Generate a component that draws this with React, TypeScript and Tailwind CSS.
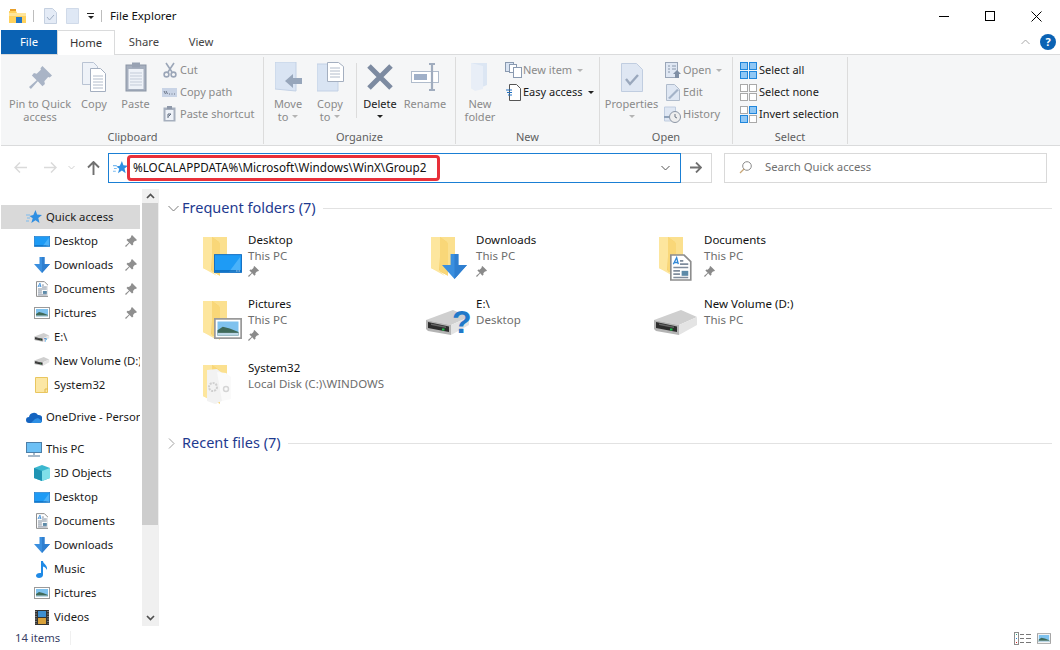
import React from "react";

const F = "font-['Noto_Sans','Open_Sans',sans-serif]";

/* ---------- small drawings ---------- */
const Folder = () => (
  <svg width="40" height="42" viewBox="0 0 40 42">
    <path d="M1 2h24v32H9z" fill="#fbe08f" />
    <path d="M1 2h9l7 5v33L1 33z" fill="#f6d06e" />
    <path d="M1 2l9 0 1 6-2 27 6 6L1 33z" fill="#fde69e" />
    <path d="M10 2l8 6v33l-8-5z" fill="#f9d778" />
  </svg>
);
const ScreenBlue = ({ w = 30, h = 20 }: { w?: number; h?: number }) => (
  <svg width={w} height={h} viewBox="0 0 30 20">
    <rect x="0.5" y="0.5" width="29" height="19" fill="#1e9bf5" stroke="#0f6cc0" />
    <path d="M16 19L28 3v16z" fill="#49b2fa" />
    <path d="M1 18h28" stroke="#0a5fae" strokeWidth="1.4" />
    <path d="M24 18h1M26.500 18h1" stroke="#fff" />
  </svg>
);
const ArrowDown = ({ s = 16 }: { s?: number }) => (
  <svg width={s} height={s} viewBox="0 0 16 16">
    <path d="M5.500 0h5v7H16l-8 9-8-9h5.500z" fill="#3a8fdf" />
    <path d="M8 0h2.500v7H16l-8 9z" fill="#2f7fd0" />
  </svg>
);
const Doc = ({ s = 16 }: { s?: number }) => (
  <svg width={s * 0.8} height={s} viewBox="0 0 13 16">
    <path d="M.5.500h8l4 4v11H.5z" fill="#fff" stroke="#8d8d8d" />
    <path d="M6 4h2M6 6h5M2 8h9M2 10h4M2 12h4M2 14h9" stroke="#7f8c9c" />
    <path d="M2 6l2-4 1 4M2.500 5H5" stroke="#2e86d6" fill="none" strokeWidth=".8" />
    <rect x="7" y="10" width="4" height="3" fill="#5d8aa8" />
  </svg>
);
const Photo = ({ w = 16, h = 12 }: { w?: number; h?: number }) => (
  <svg width={w} height={h} viewBox="0 0 16 12">
    <rect x="0.5" y="0.5" width="15" height="11" fill="#fff" stroke="#9a9a9a" />
    <rect x="2" y="2" width="12" height="8" fill="#7fc2ee" />
    <path d="M2 7l3-2 4 1 5 2v2H2z" fill="#3f6a5a" />
    <rect x="2" y="8.500" width="12" height="1.500" fill="#bcd7e6" />
  </svg>
);
const Drive = ({ w = 46, q = false, qs = 32 }: { w?: number; q?: boolean; qs?: number }) => (
  <svg width={w} height={(w * 30) / 46} viewBox="0 0 46 30" className="overflow-visible">
    <path d="M1 13L28 3l16 7-18 8z" fill="#cfcfcf" />
    <path d="M1 13l25 5v10L3 24l-2-2z" fill="#b4b4b4" />
    <path d="M3 15l21 4.500v5.500L3 21z" fill="#2d2d2d" />
    <path d="M6 16.500l15 3v1.500l-15-3z" fill="#666" />
    <path d="M26 18l18-8v8L26 28z" fill="#e4e4e4" />
    <rect x="17" y="21.500" width="2.500" height="2" fill="#21c04b" />
    {q && (
      <text x="27" y={w > 30 ? 26 : 28} fontSize={qs} fontWeight="700" fill="#2179c9" fontFamily="Liberation Sans">
        ?
      </text>
    )}
  </svg>
);
const Pin = ({ c = "#8f8f8f", s = 12 }: { c?: string; s?: number }) => (
  <svg width={s} height={s} viewBox="0 0 12 12">
    <path d="M7 0l5 5-1.200 1-.8-.2L8 8l.3 1.400L7 10.500 4.600 8 1 12l-1-1 4-3.600L1.500 5 2.600 3.700 4 4l2.200-2-.2-.8z" fill={c} />
  </svg>
);
const Star = ({ s = 16 }: { s?: number }) => (
  <svg width={s} height={s} viewBox="0 0 16 16">
    <path d="M9.500 1l1.600 4.500L16 6l-3.700 3 1.200 5-4-2.700L5.300 14l1.400-4.700L3.500 7l3.800-.9z" fill="#2f8fe2" />
    <path d="M0 6h4M1 9h3M0 12h3" stroke="#7cbcf0" strokeWidth="1.200" />
  </svg>
);
const Cap = () => <span className="inline-block w-0 h-0 border-x-[3px] border-x-transparent border-t-[3px] border-t-[#b4b4b4]" />;
const CapDark = () => <span className="inline-block w-0 h-0 border-x-[3px] border-x-transparent border-t-[3px] border-t-[#222]" />;

/* ---------- ribbon ---------- */
const Big = ({ w, icon, l1, l2, dark }: { w: string; icon: React.ReactNode; l1: string; l2?: React.ReactNode; dark?: boolean }) => (
  <div className={`${w} shrink-0 flex flex-col items-center pt-[3px] leading-[13px] ${dark ? "text-[#1a1a1a]" : "text-[#8a8a8a]"}`}>
    <div className="h-[34px] shrink-0 flex items-center justify-center">{icon}</div>
    <div className="mt-[3px] whitespace-nowrap h-[13px]">{l1}</div>
    {l2 && <div className="whitespace-nowrap h-[13px] flex items-center gap-1">{l2}</div>}
  </div>
);
const Small = ({ icon, label, dark, caret, w = "w-[19px]" }: { icon: React.ReactNode; label: string; dark?: boolean; caret?: React.ReactNode; w?: string }) => (
  <div className={`h-[22px] shrink-0 flex items-center whitespace-nowrap ${dark ? "text-[#1a1a1a]" : "text-[#8a8a8a]"}`}>
    <span className={`${w} shrink-0 flex justify-center`}>{icon}</span>
    <span className="ml-px">{label}</span>
    {caret && <span className="ml-[5px] flex">{caret}</span>}
  </div>
);
const Group = ({ w, label, children }: { w: string; label: string; children: React.ReactNode }) => (
  <div className={`${w} shrink-0 h-full flex flex-col border-r border-[#dcdcdc]`}>
    <div className="flex-1 flex min-h-0">{children}</div>
    <div className="h-[14px] text-center text-[#5f5f5f] leading-[14px]">{label}</div>
  </div>
);
const SelIcon = ({ mask }: { mask: boolean[] }) => (
  <svg width="17" height="17" viewBox="0 0 17 17">
    {[0, 1, 2, 3].map((i) => {
      const x = i % 2 ? 9.5 : 0.5, y = i > 1 ? 9.5 : 0.5;
      return <rect key={i} x={x} y={y} width="7" height="7" fill={mask[i] ? "#8fc7f5" : "#fff"} stroke={mask[i] ? "#1f86dc" : "#a9a9a9"} />;
    })}
  </svg>
);
const Ribbon = () => (
  <div className="h-[92px] bg-[#f5f6f7] border-b border-[#dadbdc] flex pt-[3px] pb-[1px] pl-[1px] text-[#8a8a8a] text-[11px]">
    <Group w="w-[262px]" label="Clipboard">
      <Big w="w-[76px]" icon={<svg width="23" height="23" viewBox="0 0 12 12"><path d="M7 0l5 5-1.200 1-.8-.2L8 8l.3 1.400L7 10.500 4.600 8 1 12l-1-1 4-3.600L1.500 5 2.600 3.700 4 4l2.200-2-.2-.8z" fill="#a9b4c6" /></svg>} l1="Pin to Quick" l2="access" />
      <Big w="w-[32px]" icon={<svg width="26" height="30" viewBox="0 0 26 30"><path d="M1.500.500h11l4 4v18h-15z" fill="#eef2f8" stroke="#b9c3d3" /><path d="M9.500 6.500h10l5 5v18h-15z" fill="#fff" stroke="#a4afc0" /><path d="M12 14h10M12 17h10M12 20h10M12 23h10M12 26h10" stroke="#b2bccb" /></svg>} l1="Copy" />
      <Big w="w-[51px]" icon={<svg width="22" height="30" viewBox="0 0 22 30"><rect x="1" y="3" width="20" height="26" fill="#a6afbe" stroke="#8b95a6" /><rect x="3.500" y="7" width="15" height="20" fill="#eef2f8" /><rect x="7" y="0.500" width="8" height="5" fill="#98a2b3" /><path d="M5 11h12M5 14h12M5 17h12M5 20h12M5 23h12" stroke="#c3cbd8" /></svg>} l1="Paste" />
      <div className="flex flex-col pt-[2px] -ml-[1px]">
        <Small icon={<svg width="14" height="16" viewBox="0 0 14 16" fill="none" stroke="#9ba6b8" strokeWidth="1.600"><path d="M3 1l6 9M11 1l-6 9" /><circle cx="3.500" cy="12.500" r="2.400" /><circle cx="10.500" cy="12.500" r="2.400" /></svg>} label="Cut" />
        <Small icon={<svg width="15" height="9" viewBox="0 0 15 9"><rect width="15" height="9" fill="#c9d4e6" /><path d="M2 3l1.500 3M4 3l1.500 3M7 6h1M9.500 6h1M12 6h1" stroke="#6a7486" /></svg>} label="Copy path" />
        <Small icon={<svg width="13" height="16" viewBox="0 0 13 16"><rect x=".5" y="1.500" width="12" height="14" fill="#a6afbe" /><rect x="2.500" y="4" width="8" height="10" fill="#eef2f8" /><rect x="4" y="0" width="5" height="3" fill="#8f99aa" /><path d="M5 12V8h3M8 8L5.500 10.500" stroke="#5e6a7d" fill="none" /></svg>} label="Paste shortcut" />
      </div>
    </Group>
    <Group w="w-[192px]" label="Organize">
      <Big w="w-[48px]" icon={<svg width="27" height="30" viewBox="0 0 27 30"><path d="M0 0h21v29L0 27z" fill="#d9e4f3" stroke="#c3d1e5" /><path d="M10 19l8-7v4h9v6h-9v4z" fill="#97a6bb" /></svg>} l1="Move" l2={<>to <Cap /></>} />
      <Big w="w-[36px]" icon={<svg width="27" height="30" viewBox="0 0 27 30"><path d="M0 2h21v27H0z" fill="#d9e4f3" stroke="#c3d1e5" /><path d="M10.500.500h11l5 4v15h-16z" fill="#fff" stroke="#a4afc0" /><path d="M13 6h10M13 9h10M13 12h10M13 15h10" stroke="#b2bccb" /></svg>} l1="Copy" l2={<>to <Cap /></>} />
      <div className="w-px h-[55px] mt-[6px] ml-[8px] shrink-0 bg-[#dcdcdc]" />
      <Big w="w-[46px]" dark icon={<svg width="26" height="26" viewBox="0 0 26 26"><path d="M2 2l22 22M24 2L2 24" stroke="#7d8ba1" strokeWidth="5" /></svg>} l1="Delete" l2={<CapDark />} />
      <Big w="w-[44px]" icon={<svg width="28" height="28" viewBox="0 0 28 28"><rect x=".5" y="8.500" width="27" height="11" fill="#fff" stroke="#b0bccc" /><rect x="3" y="11" width="13" height="6" fill="#a0b0c8" /><path d="M18 1h6M21 1v26M18 27h6" stroke="#a0acbe" strokeWidth="2.200" fill="none" /></svg>} l1="Rename" />
    </Group>
    <Group w="w-[144px]" label="New">
      <Big w="w-[48px]" icon={<svg width="20" height="29" viewBox="0 0 20 29"><path d="M1 0h16v22l-12 5-4-2z" fill="#dce6f3" /><path d="M1 0l12 3v23l-8 2-4-3z" fill="#e8eef7" /></svg>} l1="New" l2="folder" />
      <div className="flex flex-col pt-[2px]">
        <Small w="w-[18px]" icon={<svg width="17" height="16" viewBox="0 0 17 16"><rect x=".5" y=".5" width="8" height="9" fill="#d9e4f3" stroke="#8a9ab0" /><rect x="4.500" y="2.500" width="7" height="8" fill="#fff" stroke="#8a9ab0" /><rect x="8.500" y="5.500" width="8" height="10" fill="#fff" stroke="#8a9ab0" /></svg>} label="New item" caret={<Cap />} />
        <Small w="w-[18px]" dark icon={<svg width="15" height="17" viewBox="0 0 15 17"><path d="M3.500.500h7l4 4v12h-11z" fill="#fff" stroke="#555" /><path d="M0 6h6M1 8.500h5M2 11h4" stroke="#1f6fc0" /></svg>} label="Easy access" caret={<CapDark />} />
      </div>
    </Group>
    <Group w="w-[133px]" label="Open">
      <Big w="w-[63px]" icon={<svg width="22" height="29" viewBox="0 0 22 29"><path d="M.5.500h15l6 6v22H.5z" fill="#dfe7f3" stroke="#c0cde0" /><path d="M5 16l4 5 8-9" stroke="#9aa8bd" strokeWidth="2.400" fill="none" /></svg>} l1="Properties" l2={<Cap />} />
      <div className="flex flex-col pt-[2px]">
        <Small icon={<svg width="16" height="17" viewBox="0 0 16 17"><rect x=".5" y=".5" width="12" height="15" fill="#dfe7f3" stroke="#9aa6b8" /><path d="M3 4h2M7 4h4M3 7h2M7 7h4M3 10h2" stroke="#8896aa" /><path d="M12 8l4 4h-2v4h-4v-4H8z" fill="#7f8fa5" /></svg>} label="Open" caret={<Cap />} />
        <Small icon={<svg width="14" height="17" viewBox="0 0 14 17"><path d="M.5.500h8l5 5v11H.5z" fill="#dfe7f3" stroke="#b0bccc" /><path d="M2 14l9-9 2 1-9 9z" fill="#a4b3c8" /></svg>} label="Edit" />
        <Small icon={<svg width="17" height="17" viewBox="0 0 17 17"><path d="M.5 1h11v14H.5z" fill="#dfe7f3" stroke="#c0cde0" /><circle cx="11" cy="11" r="5.500" fill="#eee" stroke="#8c96a5" /><path d="M11 8v3l2 1" stroke="#6c7685" fill="none" /><path d="M0 11h5" stroke="#8fa2ba" strokeWidth="2" /></svg>} label="History" />
      </div>
    </Group>
    <Group w="w-[115px]" label="Select">
      <div className="flex flex-col pt-[2px] pl-[6px] text-[#1a1a1a]">
        <Small w="w-[19px]" dark icon={<SelIcon mask={[true, true, true, true]} />} label="Select all" />
        <Small w="w-[19px]" dark icon={<SelIcon mask={[false, false, false, false]} />} label="Select none" />
        <Small w="w-[19px]" dark icon={<SelIcon mask={[false, true, true, false]} />} label="Invert selection" />
      </div>
    </Group>
  </div>
);

/* ---------- sidebar ---------- */
const Row = ({ icon, label, pin, sel, indent = true, mt = "" }: { icon: React.ReactNode; label: string; pin?: boolean; sel?: boolean; indent?: boolean; mt?: string }) => (
  <div className={`h-[24px] flex items-center shrink-0 ${sel ? "bg-[#d9d9d9]" : ""} ${indent ? "pl-[32px]" : "pl-[24px]"} ${mt}`}>
    <span className="w-[18px] shrink-0 flex justify-center">{icon}</span>
    <span className="ml-[3px] flex-1 min-w-0 overflow-hidden whitespace-nowrap text-[#1a1a1a]">{label}</span>
    {pin && <span className="mr-[3px] ml-1 flex"><Pin /></span>}
  </div>
);
const SideFolder = () => (
  <svg width="14" height="16" viewBox="0 0 14 16"><path d="M.5.500h12v15H.5z" fill="#fce7a4" stroke="#e9c65f" /><path d="M10 15v-3h3" stroke="#e3bb4d" fill="none" /></svg>
);
const Music = () => (
  <svg width="12" height="17" viewBox="0 0 12 17"><path d="M5 0h2c0 3 5 4 4 9-1-2-2-3-4-3.500V14c0 2-2 3-4 3s-3-1-3-2.500S2 11.500 5 12z" fill="#1f8ae6" /></svg>
);
const Sidebar = () => (
  <div className="w-[157px] shrink-0 flex">
    <div className="w-[139px] shrink-0 flex flex-col pt-[16px] overflow-hidden">
      <Row sel indent={false} icon={<Star />} label="Quick access" />
      <Row pin icon={<ScreenBlue w={16} h={11} />} label="Desktop" />
      <Row pin icon={<ArrowDown />} label="Downloads" />
      <Row pin icon={<Doc />} label="Documents" />
      <Row pin icon={<Photo />} label="Pictures" />
      <Row icon={<Drive w={16} q qs={15} />} label="E:\" />
      <Row icon={<Drive w={16} />} label="New Volume (D:)" />
      <Row icon={<SideFolder />} label="System32" />
      <Row mt="mt-[8px]" indent={false} icon={<svg width="16" height="11" viewBox="0 0 16 11"><path d="M3 11a3 3 0 010-6 5 5 0 019-2 4 4 0 011 8z" fill="#1464c0" /><path d="M5 11l4-4 3-1 4 3-1 2z" fill="#2d8fe4" /></svg>} label="OneDrive - Personal" />
      <Row mt="mt-[8px]" indent={false} icon={<svg width="16" height="15" viewBox="0 0 16 15"><rect x=".5" y=".5" width="15" height="10" fill="#6cc0f5" stroke="#4d7fa8" /><path d="M8 11v2M2 14h12" stroke="#8aa2b8" strokeWidth="1.500" /></svg>} label="This PC" />
      <Row icon={<svg width="16" height="16" viewBox="0 0 16 16"><path d="M8 0l8 3v10l-8 3-8-3V3z" fill="#3bb7cf" /><path d="M8 6l8-3v10l-8 3z" fill="#7fe0ea" /><path d="M0 3l8 3v10L0 13z" fill="#1f94b3" /></svg>} label="3D Objects" />
      <Row icon={<ScreenBlue w={16} h={11} />} label="Desktop" />
      <Row icon={<Doc />} label="Documents" />
      <Row icon={<ArrowDown />} label="Downloads" />
      <Row icon={<Music />} label="Music" />
      <Row icon={<Photo />} label="Pictures" />
      <Row icon={<svg width="14" height="15" viewBox="0 0 14 15"><rect width="14" height="15" fill="#333" /><rect x="3" y="1" width="8" height="6" fill="#3e8fd0" /><rect x="3" y="8" width="8" height="6" fill="#d9a13a" /><path d="M1 1v13M13 1v13" stroke="#bbb" strokeDasharray="1 1.500" /></svg>} label="Videos" />
    </div>
    <div className="w-[16px] shrink-0 ml-[2px] bg-[#f0f0f0] flex flex-col">
      <div className="h-[14px] shrink-0 flex items-center justify-center"><svg width="9" height="6" viewBox="0 0 9 6"><path d="M1 5l3.500-3.500L8 5" stroke="#505050" strokeWidth="1.700" fill="none" /></svg></div>
      <div className="h-[322px] shrink-0 bg-[#cdcdcd]" />
      <div className="flex-1 flex items-end justify-center pb-[5px]"><svg width="9" height="6" viewBox="0 0 9 6"><path d="M1 1l3.500 3.500L8 1" stroke="#505050" strokeWidth="1.700" fill="none" /></svg></div>
    </div>
  </div>
);

/* ---------- content ---------- */
const Tile = ({ icon, name, sub, pin }: { icon: React.ReactNode; name: string; sub: string; pin?: boolean }) => (
  <div className="h-[64px] flex">
    <div className="w-[53px] shrink-0 pt-[3px] relative">{icon}</div>
    <div className="flex flex-col leading-[15.5px] text-[11.5px]">
      <span className="text-[#111] whitespace-nowrap">{name}</span>
      <span className="text-[#6d6d6d] whitespace-nowrap">{sub}</span>
      {pin && <span className="pt-[3px] flex"><Pin c="#8a8a8a" s={11} /></span>}
    </div>
  </div>
);
const FolderWith = ({ children }: { children?: React.ReactNode }) => (
  <div className="relative w-[46px] h-[42px] ml-[7px]">
    <Folder />
    {children && <div className="absolute left-[12px] top-[19px]">{children}</div>}
  </div>
);
const Sec = ({ open, label }: { open: boolean; label: string }) => (
  <div className="flex items-center h-[24px] pl-[9px] pr-[8px]">
    <span className="w-[14px] flex">
      {open ? (
        <svg width="11" height="7" viewBox="0 0 11 7"><path d="M.5 1l5 5 5-5" stroke="#7c7c7c" fill="none" /></svg>
      ) : (
        <svg width="7" height="11" viewBox="0 0 7 11"><path d="M1 .5l5 5-5 5" stroke="#a0a0a0" fill="none" /></svg>
      )}
    </span>
    <span className="text-[#1e3a8f] text-[14.5px] whitespace-nowrap">{label}</span>
    <div className="flex-1 h-px bg-[#e2e2e2] ml-[7px]" />
  </div>
);
const Content = () => (
  <div className="flex-1 min-w-0 flex flex-col pt-[7px] border-l border-[#efefef]">
    <Sec open label="Frequent folders (7)" />
    <div className="grid grid-cols-[228px_228px_228px] pl-[36px] pt-[12px]">
      <Tile name="Desktop" sub="This PC" pin icon={<FolderWith><ScreenBlue w={28} h={19} /></FolderWith>} />
      <Tile name="Downloads" sub="This PC" pin icon={<FolderWith><ArrowDown s={25} /></FolderWith>} />
      <Tile name="Documents" sub="This PC" pin icon={<FolderWith><Doc s={27} /></FolderWith>} />
      <Tile name="Pictures" sub="This PC" pin icon={<FolderWith><Photo w={28} h={21} /></FolderWith>} />
      <Tile name="E:\" sub="Desktop" icon={<div className="pt-[8px] ml-[2px]"><Drive q /></div>} />
      <Tile name="New Volume (D:)" sub="This PC" icon={<div className="pt-[8px] ml-[2px]"><Drive /></div>} />
      <Tile name="System32" sub="Local Disk (C:)\WINDOWS" icon={<FolderWith><svg width="26" height="36" viewBox="0 0 26 36" className="-mt-[14px] -ml-[8px]"><path d="M1 2l10-1 5 4v28l-7 3-8-3z" fill="#f2f2f2" /><path d="M11 4l9 1 5 4v22l-9 2z" fill="#fafafa" /><circle cx="7" cy="19" r="4" fill="none" stroke="#cfcfcf" strokeWidth="2" strokeDasharray="2 1" /><circle cx="20" cy="21" r="2.500" fill="none" stroke="#d5d5d5" strokeWidth="1.500" /></svg></FolderWith>} />
    </div>
    <div className="mt-[-1px] pt-[8px]"><Sec open={false} label="Recent files (7)" /></div>
  </div>
);

export default function App() {
  return (
    <div className={`${F} w-[1060px] h-[650px] bg-white overflow-hidden flex flex-col text-[11.3px] text-[#1a1a1a] pl-[1px]`}>
      {/* title */}
      <div className="h-[30px] flex items-center pl-[8px] pt-[2px] shrink-0">
        <svg width="17" height="14" viewBox="0 0 17 14"><path d="M0 2h7l1 2h9v10H0z" fill="#ffd15c" /><path d="M0 4h17v3H0z" fill="#ffe59a" /><rect x="7" y="8" width="6" height="6" fill="#1f74c8" /><rect x="1" y="0" width="6" height="2" fill="#e8a02c" /></svg>
        <div className="w-px h-[12px] bg-[#bdbdbd] ml-[7px]" />
        <svg className="ml-[10px]" width="13" height="16" viewBox="0 0 13 16"><path d="M.5.500h8l4 4v11H.5z" fill="#e4ebf6" stroke="#c5d0e0" /><path d="M3 9l2.500 3 4.500-5" stroke="#a0aec2" fill="none" /></svg>
        <svg className="ml-[9px]" width="13" height="16" viewBox="0 0 13 16"><path d="M.5.500h12v15H.5z" fill="#dfe8f5" stroke="#d0dae9" /></svg>
        <span className="ml-[8px] flex flex-col items-center gap-[2px]"><span className="w-[7px] h-px bg-[#222]" /><CapDark /></span>
        <div className="w-px h-[12px] bg-[#bdbdbd] ml-[7px]" />
        <span className="ml-[8px] text-[#111] text-[11.5px]">File Explorer</span>
        <div className="ml-auto flex items-center pr-[1px]">
          <span className="w-[46px] flex justify-center"><span className="w-[10px] h-px bg-black" /></span>
          <span className="w-[46px] flex justify-center"><span className="w-[10px] h-[10px] border border-black" /></span>
          <span className="w-[46px] flex justify-center"><svg width="11" height="11" viewBox="0 0 11 11"><path d="M.5.500l10 10M10.500.500l-10 10" stroke="#000" /></svg></span>
        </div>
      </div>
      {/* tabs */}
      <div className="h-[25px] flex shrink-0 relative z-10 -mb-px items-stretch border-b border-[#dadbdc]">
        <div className="w-[56px] bg-[#0a62b4] text-white flex items-center justify-center">File</div>
        <div className="w-[58px] bg-white border-x border-t border-[#dadbdc] -mb-px flex items-center justify-center text-[#333]">Home</div>
        <div className="w-[58px] flex items-center justify-center text-[#444]">Share</div>
        <div className="w-[56px] flex items-center justify-center text-[#444]">View</div>
        <div className="ml-auto flex items-center pr-[4px] gap-[10px]">
          <svg width="9" height="6" viewBox="0 0 9 6"><path d="M.5 5l4-4 4 4" stroke="#a8a8a8" fill="none" /></svg>
          <span className="w-[16px] h-[16px] rounded-full bg-[#0a62b4] text-white font-bold text-[11px] flex items-center justify-center">?</span>
        </div>
      </div>
      <Ribbon />
      {/* nav */}
      <div className="h-[43px] shrink-0 flex items-center text-[#1a1a1a]">
        <svg className="ml-[13px]" width="13" height="11" viewBox="0 0 13 11"><path d="M6 .5l-5 5 5 5M1 5.500h12" stroke="#dadada" strokeWidth="1.500" fill="none" /></svg>
        <svg className="ml-[17px]" width="13" height="11" viewBox="0 0 13 11"><path d="M7 .5l5 5-5 5M0 5.500h12" stroke="#dadada" strokeWidth="1.500" fill="none" /></svg>
        <svg className="ml-[11px]" width="7" height="5" viewBox="0 0 7 5"><path d="M.5 1l3 3 3-3" stroke="#d0d0d0" fill="none" /></svg>
        <svg className="ml-[12px]" width="13" height="14" viewBox="0 0 13 14"><path d="M6.500 14V1M1 6.500l5.500-5.500 5.500 5.500" stroke="#707070" strokeWidth="1.900" fill="none" /></svg>
        <div className="ml-[8px] w-[573px] h-[30px] border border-[#1a7fd4] flex items-center pl-[4px] pr-[10px]">
          <Star s={15} />
          <div className="-ml-[1px] w-[313px] h-[26px] border-[3px] border-[#e8303a] rounded-[4px] flex items-center pl-[3px] text-[#111] text-[11.7px] whitespace-nowrap">%LOCALAPPDATA%\Microsoft\Windows\WinX\Group2</div>
          <svg className="ml-auto" width="9" height="6" viewBox="0 0 9 6"><path d="M.5 1l4 4 4-4" stroke="#555" fill="none" /></svg>
        </div>
        <div className="w-[31px] h-[30px] border border-l-0 border-[#d9d9d9] flex items-center justify-center">
          <svg width="12" height="11" viewBox="0 0 12 11"><path d="M6 .5l5 5-5 5M0 5.500h11" stroke="#707070" strokeWidth="1.800" fill="none" /></svg>
        </div>
        <div className="ml-[12px] w-[323px] h-[30px] border border-[#d9d9d9] flex items-center pl-[14px] text-[#6f6f6f]">
          <svg width="13" height="13" viewBox="0 0 13 13"><circle cx="8" cy="5" r="4.300" fill="none" stroke="#8b8b8b" /><path d="M5 8l-4 4" stroke="#c9a777" strokeWidth="1.200" /></svg>
          <span className="ml-[13px]">Search Quick access</span>
        </div>
      </div>
      {/* main */}
      <div className="flex-1 min-h-0 flex">
        <Sidebar />
        <Content />
      </div>
      {/* status */}
      <div className="h-[24px] shrink-0 flex items-center pl-[14px] pr-[9px] text-[#3a3f66]">
        <span>14 items</span>
        <div className="w-px h-[14px] bg-[#f0f0f0] ml-[10px]" />
        <div className="ml-auto flex items-center gap-[6px]">
          <svg width="17" height="13" viewBox="0 0 17 13"><rect x=".5" y=".5" width="4" height="12" fill="#fff" stroke="#8c8c8c" /><rect x="2" y="2" width="1" height="1" fill="#3a8" /><rect x="2" y="6" width="1" height="1" fill="#28d" /><rect x="2" y="10" width="1" height="1" fill="#d22" /><path d="M6 2.500h4M12 2.500h5M6 6.500h4M12 6.500h5M6 10.500h4M12 10.500h5" stroke="#777" /></svg>
          <Photo w={14} h={11} />
        </div>
      </div>
    </div>
  );
}
